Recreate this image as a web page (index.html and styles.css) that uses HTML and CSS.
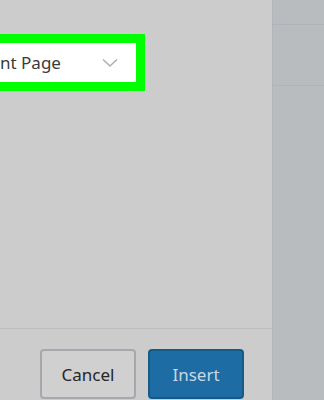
FILE: index.html
```html
<!DOCTYPE html>
<html lang="en">
<head>
    <meta charset="UTF-8">
    <meta name="viewport" content="width=device-width, initial-scale=1.0">
    <title>Insert Link</title>
    <link rel="stylesheet" href="styles.css">
</head>
<body>
    <div class="modal">
        <div class="modal-body">
            <div class="select-highlight">
                <div class="select-box">
                    <span class="select-text">nt Page</span>
                    <svg class="chevron" width="16" height="10" viewBox="0 0 16 10">
                        <path d="M1 1.5 L8 8 L15 1.5" fill="none" stroke="#aab2ba" stroke-width="1.6"/>
                    </svg>
                </div>
            </div>
        </div>
        <div class="modal-footer">
            <button class="btn btn-cancel">Cancel</button>
            <button class="btn btn-insert">Insert</button>
        </div>
    </div>
    <div class="sidebar">
        <div class="sidebar-row first"></div>
        <div class="sidebar-row"></div>
    </div>
</body>
</html>
```

FILE: styles.css
```css
body {
    margin: 0;
    height: 400px;
    display: flex;
    overflow: hidden;
    font-family: "Noto Sans", "Open Sans", sans-serif;
    background-color: #b9bcbf;
}

.modal {
    width: 272px;
    background-color: #cccccc;
    border-right: 1px solid #b2b6ba;
    display: flex;
    flex-direction: column;
}

.modal-body {
    height: 328px;
    padding-top: 34px;
    box-sizing: border-box;
}

.select-highlight {
    width: 145px;
    box-sizing: border-box;
    border: 9px solid #00ff00;
    border-left: none;
}

.select-box {
    height: 39px;
    background-color: #ffffff;
    display: flex;
    align-items: center;
    justify-content: space-between;
    padding-right: 18px;
}

.select-text {
    font-size: 17px;
    color: #3a3a3a;
    margin-top: -1px;
}

.chevron {
    display: block;
}

.modal-footer {
    border-top: 1px solid #bdbfc2;
    display: flex;
    justify-content: flex-end;
    gap: 12px;
    padding: 20px 28px 0 0;
}

.btn {
    width: 96px;
    height: 50px;
    border-radius: 4px;
    font-family: "Noto Sans", "Open Sans", sans-serif;
    font-size: 17px;
    cursor: pointer;
    box-sizing: border-box;
}

.btn-cancel {
    background-color: #d0d0d0;
    border: 2px solid #a5a9ad;
    color: #262626;
}

.btn-insert {
    background-color: #1d6ca3;
    border: 2px solid #165a88;
    color: #c9d8e4;
}

.sidebar {
    flex: 1;
}

.sidebar-row {
    height: 60px;
    border-bottom: 1px solid #b0b4b8;
}

.sidebar-row.first {
    height: 24px;
}
```
